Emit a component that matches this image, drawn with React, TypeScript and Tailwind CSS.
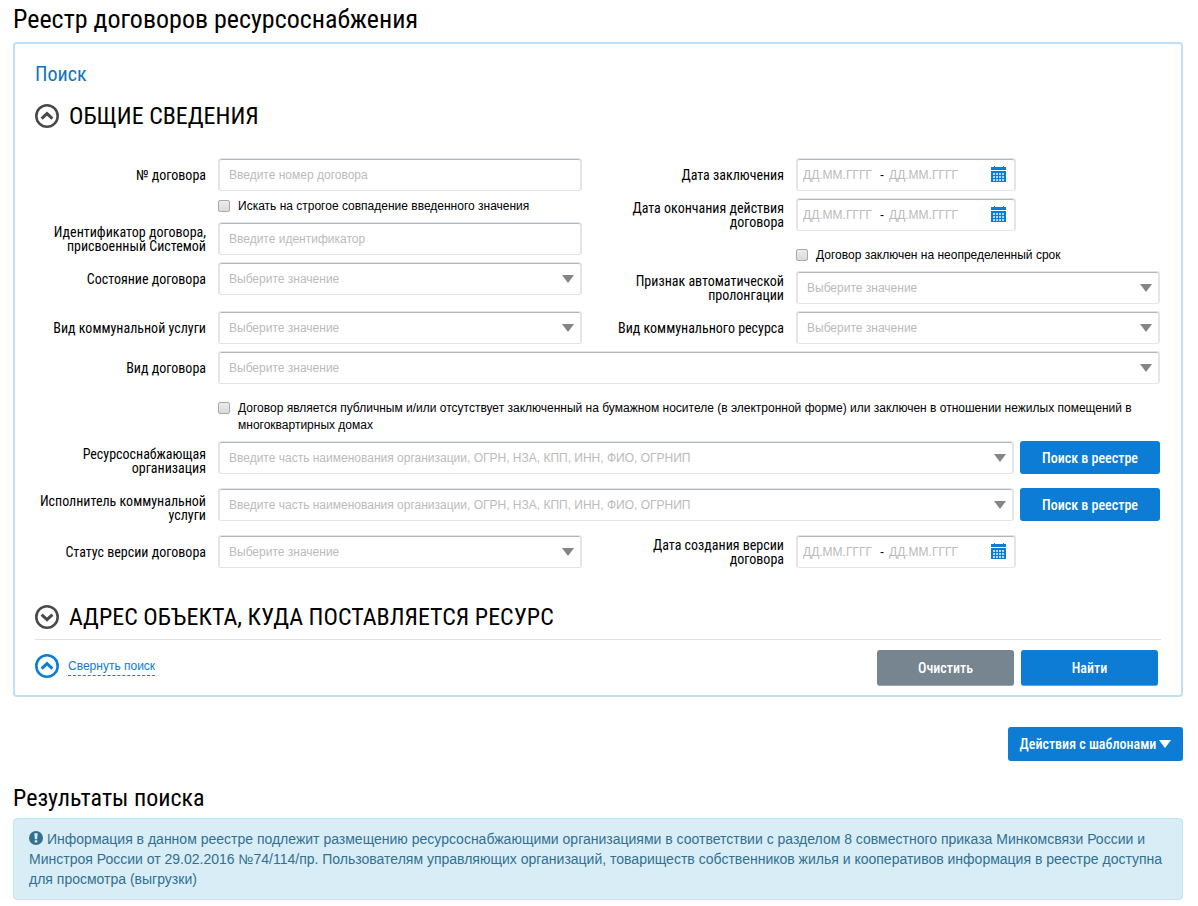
import { useState, type ReactNode } from "react";

const organizationHint =
  "Введите часть наименования организации, ОГРН, НЗА, КПП, ИНН, ФИО, ОГРНИП";

const condensed = "font-['Roboto_Condensed','Liberation_Sans_Narrow',sans-serif]";

const box =
  "flex h-[33px] items-center rounded-[3px] border border-x-2 border-[#e3e6e9] bg-white text-xs shadow-[inset_0_1px_0_#b4b7b9]";

const buttonBase =
  "rounded-[3px] text-sm font-medium text-white cursor-pointer font-['Roboto_Condensed','Liberation_Sans_Narrow',sans-serif]";

function ChevronCircle({ down = false, className }: { down?: boolean; className: string }) {
  return (
    <svg viewBox="0 0 24 24" fill="none" className={`size-6 shrink-0 ${className}`} aria-hidden="true">
      <circle cx="12" cy="12" r="10.7" stroke="currentColor" strokeWidth="2.6" />
      <path
        d={down ? "M6.6 9.6 12 14.6 17.4 9.6" : "M6.6 14.6 12 9.6 17.4 14.6"}
        stroke="currentColor"
        strokeWidth="3"
      />
    </svg>
  );
}

function Arrow({ className = "text-[#858585]" }: { className?: string }) {
  return (
    <svg viewBox="0 0 12 8" className={`h-2 w-3 shrink-0 ${className}`} aria-hidden="true">
      <path d="M0 0h12L6 8z" fill="currentColor" />
    </svg>
  );
}

function CalendarIcon() {
  return (
    <svg viewBox="0 0 16 16" className="size-4" aria-hidden="true">
      <path d="M3 0h1v1h8V0h1v1h2v3H0V1h3zM0 5h15v11H0z" fill="#0c7cd5" />
      <path
        d="M2 7h2v2H2zM5 7h2v2H5zM8 7h2v2H8zM11 7h2v2h-2zM2 10h2v2H2zM5 10h2v2H5zM8 10h2v2H8zM11 10h2v2h-2zM2 13h2v2H2zM5 13h2v2H5zM8 13h2v2H8zM11 13h2v2h-2z"
        fill="#b5d7f2"
      />
    </svg>
  );
}

function Row({ label, id, children, tall = false }: { label: string; id: string; children: ReactNode; tall?: boolean }) {
  return (
    <div className={`flex items-start gap-3 ${tall ? "h-10" : ""}`}>
      <label
        htmlFor={id}
        className={`w-[171px] shrink-0 self-center text-right text-sm leading-[14px] ${condensed}`}
      >
        {label}
      </label>
      {children}
    </div>
  );
}

function TextField({ id, placeholder }: { id: string; placeholder: string }) {
  return (
    <div className={`${box} min-w-0 flex-1`}>
      <input
        id={id}
        type="text"
        placeholder={placeholder}
        className="h-full w-full px-[9px] outline-none placeholder:text-[#bbb]"
      />
    </div>
  );
}

function SelectField({ id }: { id: string }) {
  return (
    <div className={`${box} relative min-w-0 flex-1`}>
      <select id={id} className="h-full w-full appearance-none px-[9px] text-[#bbb] outline-none">
        <option>Выберите значение</option>
      </select>
      <span className="pointer-events-none absolute right-[6px]">
        <Arrow />
      </span>
    </div>
  );
}

function OrganizationField({ id }: { id: string }) {
  return (
    <div className="flex min-w-0 flex-1 gap-[6px]">
      <div className={`${box} min-w-0 flex-1 pr-[6px]`}>
        <input
          id={id}
          type="text"
          placeholder={organizationHint}
          className="h-full min-w-0 flex-1 px-[9px] outline-none placeholder:text-[#bbb]"
        />
        <Arrow />
      </div>
      <button type="button" className={`${buttonBase} h-[33px] w-[140px] bg-[#0c7cd5]`}>
        Поиск в реестре
      </button>
    </div>
  );
}

function DateRange({ id }: { id: string }) {
  const dateInput = "w-[72px] outline-none placeholder:text-[#bbb]";
  return (
    <div className={`${box} w-[220px] pl-[5px] pr-[7px]`}>
      <input id={id} type="text" placeholder="ДД.ММ.ГГГГ" className={dateInput} />
      <span className="w-[14px] text-center">-</span>
      <input type="text" placeholder="ДД.ММ.ГГГГ" aria-label="Дата по" className={dateInput} />
      <button type="button" aria-label="Открыть календарь" className="ml-auto cursor-pointer pb-[2px]">
        <CalendarIcon />
      </button>
    </div>
  );
}

function Check({ children, className = "" }: { children: ReactNode; className?: string }) {
  return (
    <label className={`flex items-start gap-2 pl-[183px] text-xs leading-[17px] ${className}`}>
      <input
        type="checkbox"
        className="mt-[2px] size-3 shrink-0 appearance-none rounded-[2px] border border-[#a9a9a9] bg-linear-to-b from-[#ececec] to-[#dadada] checked:from-[#0c7cd5] checked:to-[#0c7cd5]"
      />
      <span>{children}</span>
    </label>
  );
}

function Section({ title, open, onToggle }: { title: string; open: boolean; onToggle: () => void }) {
  return (
    <h3>
      <button
        type="button"
        aria-expanded={open}
        onClick={onToggle}
        className={`flex cursor-pointer items-center gap-[10px] text-2xl leading-7 uppercase ${condensed}`}
      >
        <ChevronCircle down={!open} className="text-[#4a4a4a]" />
        {title}
      </button>
    </h3>
  );
}

export default function App() {
  const [generalOpen, setGeneralOpen] = useState(true);
  const [addressOpen, setAddressOpen] = useState(false);

  return (
    <main className="min-h-screen bg-white pt-1 pr-[15px] pb-[6px] pl-[13px] font-['Liberation_Sans',Arial,sans-serif] text-black">
      <h1 className={`text-[26px] leading-[30px] ${condensed}`}>Реестр договоров ресурсоснабжения</h1>

      <form
        onSubmit={(e) => e.preventDefault()}
        className="mt-2 rounded-[4px] border-2 border-[#bfdff7] px-5 pt-[18px] pb-[9px]"
      >
        <h2 className={`text-xl leading-6 text-[#0c74bd] ${condensed}`}>Поиск</h2>
        <div className="mt-4">
          <Section title="Общие сведения" open={generalOpen} onToggle={() => setGeneralOpen(!generalOpen)} />
        </div>

        {generalOpen && (
          <div className="mt-7 flex flex-col gap-[7px] pr-px">
            <div className="grid grid-cols-2 gap-x-[31px]">
              <div className="flex flex-col gap-[7px]">
                <Row label="№ договора" id="number">
                  <TextField id="number" placeholder="Введите номер договора" />
                </Row>
                <Check>Искать на строгое совпадение введенного значения</Check>
                <Row label="Идентификатор договора, присвоенный Системой" id="identifier">
                  <TextField id="identifier" placeholder="Введите идентификатор" />
                </Row>
                <Row label="Состояние договора" id="state">
                  <SelectField id="state" />
                </Row>
              </div>
              <div className="flex flex-col gap-[7px]">
                <Row label="Дата заключения" id="signed">
                  <DateRange id="signed" />
                </Row>
                <Row label="Дата окончания действия договора" id="expires">
                  <DateRange id="expires" />
                </Row>
                <Check className="mt-[9px]">Договор заключен на неопределенный срок</Check>
                <Row label="Признак автоматической пролонгации" id="prolongation">
                  <SelectField id="prolongation" />
                </Row>
              </div>
            </div>

            <div className="grid grid-cols-2 gap-x-[31px]">
              <Row label="Вид коммунальной услуги" id="service">
                <SelectField id="service" />
              </Row>
              <Row label="Вид коммунального ресурса" id="resource">
                <SelectField id="resource" />
              </Row>
            </div>

            <Row label="Вид договора" id="kind">
              <SelectField id="kind" />
            </Row>
            <Check className="mt-[9px]">
              Договор является публичным и/или отсутствует заключенный на бумажном носителе (в электронной форме) или
              заключен в отношении нежилых помещений в многоквартирных домах
            </Check>

            <Row label="Ресурсоснабжающая организация" id="supplier" tall>
              <OrganizationField id="supplier" />
            </Row>
            <Row label="Исполнитель коммунальной услуги" id="executor" tall>
              <OrganizationField id="executor" />
            </Row>

            <div className="grid grid-cols-2 gap-x-[31px]">
              <Row label="Статус версии договора" id="status">
                <SelectField id="status" />
              </Row>
              <Row label="Дата создания версии договора" id="created">
                <DateRange id="created" />
              </Row>
            </div>
          </div>
        )}

        <div className="mt-[35px] border-b border-[#e0e0e0] pb-2">
          <Section
            title="Адрес объекта, куда поставляется ресурс"
            open={addressOpen}
            onToggle={() => setAddressOpen(!addressOpen)}
          />
        </div>

        <div className="flex items-start justify-between pt-[10px] pr-[3px]">
          <div className="flex items-center gap-[9px] pt-1 text-[#0c7cd5]">
            <ChevronCircle className="text-[#0c7cd5]" />
            <a href="#" className="border-b border-dashed border-[#0c7cd5] text-xs leading-[18px]">
              Свернуть поиск
            </a>
          </div>
          <div className="flex gap-[7px]">
            <button type="reset" className={`${buttonBase} h-9 w-[137px] border-b border-[#9aa4ab] bg-[#778590]`}>
              Очистить
            </button>
            <button type="submit" className={`${buttonBase} h-9 w-[137px] border-b border-[#5ba3dd] bg-[#0c7cd5]`}>
              Найти
            </button>
          </div>
        </div>
      </form>

      <div className="mt-[30px] flex justify-end">
        <button
          type="button"
          className={`${buttonBase} flex h-[34px] w-[175px] items-center justify-center gap-[3px] bg-[#0c7cd5]`}
        >
          Действия с шаблонами
          <Arrow className="text-white" />
        </button>
      </div>

      <h2 className={`mt-[22px] text-2xl leading-[30px] ${condensed}`}>Результаты поиска</h2>
      <div className="mt-[5px] rounded-[4px] border border-[#bce8f1] bg-[#d9edf7] px-[15px] py-[10px] text-sm leading-5 text-[#31708f]">
        <svg viewBox="0 0 14 14" className="mr-1 inline size-[14px] align-[-1px]" aria-hidden="true">
          <circle cx="7" cy="7" r="7" fill="currentColor" />
          <path d="M5.3 2.2h3.4L8.1 8.2H5.9zM5.7 9.2h2.6v2.4H5.7z" fill="#d9edf7" />
        </svg>
        Информация в данном реестре подлежит размещению ресурсоснабжающими организациями в соответствии с разделом 8
        совместного приказа Минкомсвязи России и Минстроя России от 29.02.2016 №74/114/пр. Пользователям управляющих
        организаций, товариществ собственников жилья и кооперативов информация в реестре доступна для просмотра
        (выгрузки)
      </div>
    </main>
  );
}
